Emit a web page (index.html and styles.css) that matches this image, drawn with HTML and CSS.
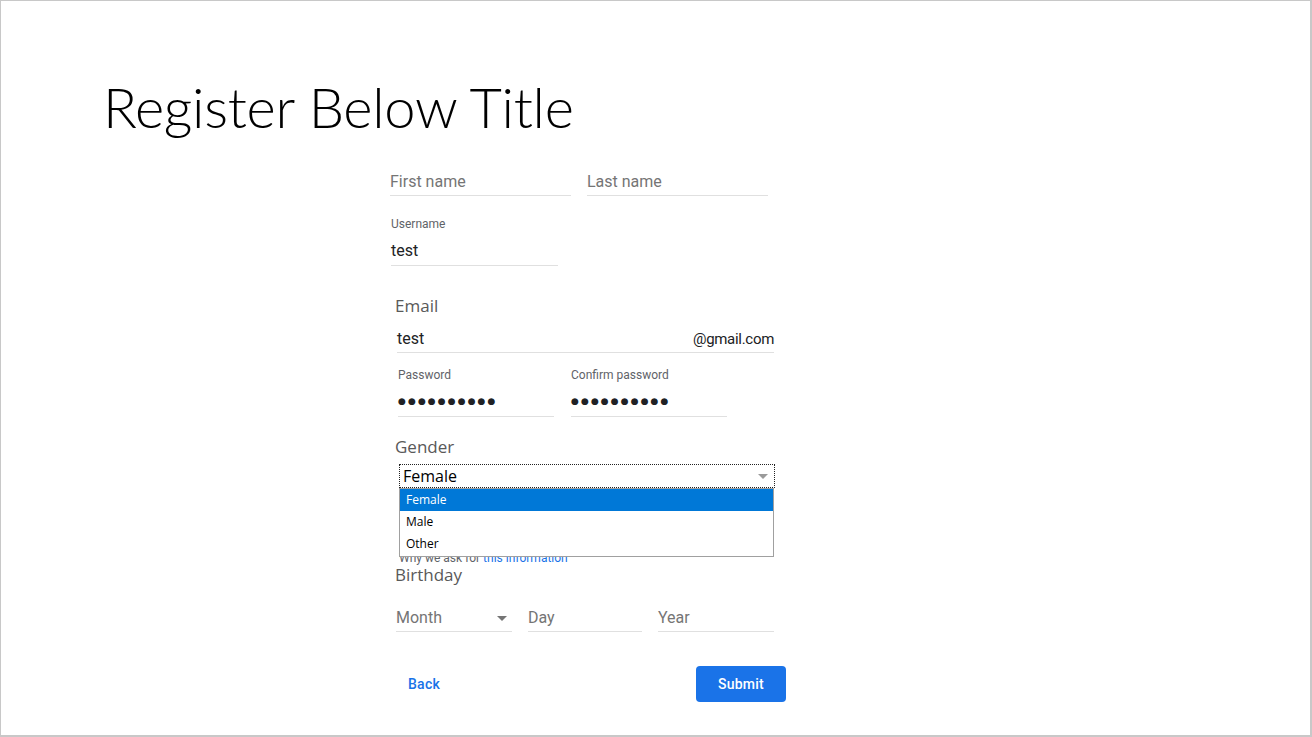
FILE: index.html
```html
<!DOCTYPE html>
<html lang="en">
<head>
<meta charset="utf-8">
<title>Register Below Title</title>
<link rel="stylesheet" href="styles.css">
</head>
<body>
<div class="slide">
  <h1 class="title">Register Below Title</h1>
  <form class="form">
    <div class="names">
      <div class="field"><span class="ph">First name</span></div>
      <div class="field"><span class="ph">Last name</span></div>
    </div>
    <div class="field username">
      <div class="small-label">Username</div>
      <div class="value">test</div>
    </div>
    <div class="section-label email-label">Email</div>
    <div class="field email">
      <span class="value">test</span>
      <span class="suffix">@gmail.com</span>
    </div>
    <div class="passwords">
      <div class="field pw">
        <div class="small-label">Password</div>
        <div class="dots">●●●●●●●●●●</div>
      </div>
      <div class="field pw">
        <div class="small-label">Confirm password</div>
        <div class="dots">●●●●●●●●●●</div>
      </div>
    </div>
    <div class="section-label gender-label">Gender</div>
    <div class="gender">
      <div class="select">
        <span>Female</span>
        <svg class="arrow" width="10" height="5" viewBox="0 0 10 5"><path d="M0 0H10L5 5Z" fill="#9a9a9a"/></svg>
      </div>
      <div class="why">Why we ask for <a href="#" class="link">this information</a></div>
      <ul class="listbox">
        <li class="opt selected">Female</li>
        <li class="opt">Male</li>
        <li class="opt">Other</li>
      </ul>
    </div>
    <div class="section-label birthday-label">Birthday</div>
    <div class="birthday">
      <div class="field month"><span class="ph">Month</span><svg class="arrow" width="10" height="5" viewBox="0 0 10 5"><path d="M0 0H10L5 5Z" fill="#757575"/></svg></div>
      <div class="field day"><span class="ph">Day</span></div>
      <div class="field year"><span class="ph">Year</span></div>
    </div>
    <div class="actions">
      <a href="#" class="back">Back</a>
      <button type="button" class="submit">Submit</button>
    </div>
  </form>
</div>
</body>
</html>
```
FILE: styles.css
```css
html, body {
  margin: 0;
  padding: 0;
  background: #fff;
}

.slide {
  box-sizing: border-box;
  width: 1312px;
  height: 737px;
  border: 1px solid #c8c8c8;
  border-right-width: 2px;
  border-bottom-width: 2px;
  padding-top: 72px;
  overflow: hidden;
}

.title {
  margin: 0;
  padding-left: 102px;
  font-family: Lato, "Open Sans", sans-serif;
  font-weight: 300;
  font-size: 56px;
  line-height: 67px;
  letter-spacing: -0.3px;
  color: #000;
}

.form {
  margin: 30px 0 0 389px;
  width: 400px;
  font-family: Roboto, sans-serif;
}

.field {
  border-bottom: 1px solid #e0e0e0;
}

.ph {
  display: block;
  font-size: 16px;
  line-height: 24px;
  padding-bottom: 1px;
  color: #757575;
}

.names {
  display: flex;
  gap: 16px;
}

.names .field {
  width: 181px;
}

.small-label {
  font-size: 12px;
  line-height: 16px;
  color: #5f6368;
}

.value {
  font-size: 16px;
  line-height: 24px;
  color: #202124;
}

.username {
  margin: 20px 0 0 1px;
  width: 167px;
}

.username .value {
  margin-top: 7px;
  padding-bottom: 2px;
}

.section-label {
  font-family: "Open Sans", sans-serif;
  font-size: 17px;
  line-height: 24px;
  color: #595959;
  margin-left: 5px;
}

.email-label {
  margin-top: 28px;
}

.email {
  display: flex;
  justify-content: space-between;
  align-items: baseline;
  margin: 9px 0 0 7px;
  width: 377px;
  padding-bottom: 1px;
}

.suffix {
  font-size: 15px;
  line-height: 24px;
  letter-spacing: -0.3px;
  color: #202124;
}

.passwords {
  display: flex;
  gap: 17px;
  margin: 14px 0 0 8px;
}

.pw {
  width: 156px;
}

.dots {
  margin-top: 6px;
  height: 24px;
  padding-bottom: 3px;
  font-family: "DejaVu Sans", sans-serif;
  font-size: 9px;
  line-height: 24px;
  letter-spacing: 2.1px;
  color: #202124;
}

.gender-label {
  margin-top: 18px;
}

.gender {
  position: relative;
  margin: 5px 0 0 9px;
  width: 376px;
}

.select {
  box-sizing: border-box;
  height: 24px;
  border: 1px dotted #222;
  padding: 0 6px 0 3px;
  display: flex;
  align-items: center;
  justify-content: space-between;
  font-family: "Open Sans", sans-serif;
  font-size: 16px;
  color: #000;
}

.why {
  margin-top: 64px;
  margin-bottom: -1px;
  font-size: 12px;
  line-height: 12px;
  color: #5f6368;
}

.link {
  color: #1a73e8;
  text-decoration: none;
}

.listbox {
  position: absolute;
  top: 24px;
  left: 0;
  width: 375px;
  height: 69px;
  box-sizing: border-box;
  margin: 0;
  padding: 0;
  list-style: none;
  background: #fff;
  border: 1px solid #a0a0a0;
  font-family: "Open Sans", sans-serif;
  font-size: 12px;
}

.opt {
  height: 22px;
  line-height: 22px;
  padding-left: 6px;
  color: #000;
}

.opt.selected {
  background: #0078d7;
  color: #fff;
}

.birthday {
  display: flex;
  gap: 16px;
  margin: 19px 0 0 6px;
}

.month {
  width: 116px;
  display: flex;
  align-items: center;
  justify-content: space-between;
}

.month .arrow {
  margin-right: 5px;
}

.day {
  width: 114px;
}

.year {
  width: 116px;
}

.actions {
  display: flex;
  justify-content: space-between;
  align-items: center;
  margin: 34px 0 0 6px;
  width: 390px;
}

.back {
  padding: 0 12px;
  font-size: 14px;
  font-weight: 500;
  letter-spacing: 0.25px;
  color: #1a73e8;
  text-decoration: none;
}

.submit {
  width: 90px;
  height: 36px;
  border: 0;
  border-radius: 4px;
  background: #1a73e8;
  color: #fff;
  font-family: Roboto, sans-serif;
  font-size: 14px;
  font-weight: 500;
  letter-spacing: 0.25px;
}
```
